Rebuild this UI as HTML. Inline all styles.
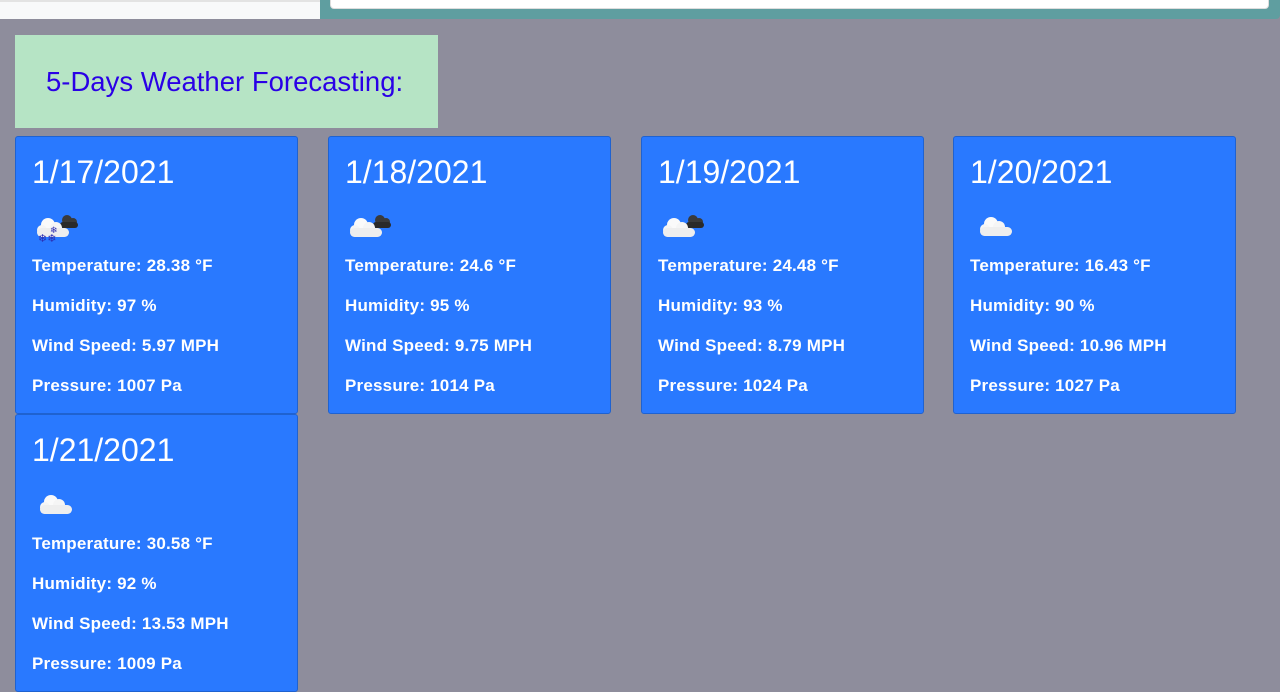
<!DOCTYPE html>
<html><head><style>
*{box-sizing:border-box;margin:0;padding:0}
body{width:1280px;height:692px;overflow:hidden;background:#8e8d9c;font-family:"Liberation Sans",sans-serif;position:relative}
.tl{position:absolute;left:0;top:0;width:320px;height:19px;background:#f8f9fa;border-top:2px solid #e3e3e3}
.tr{position:absolute;left:320px;top:0;width:960px;height:19px;background:#5f9ea0;border-bottom-right-radius:4px}
.tb{position:absolute;left:330px;top:0;width:939px;height:9px;background:#fff;border:1px solid #ddd;border-top:none;border-radius:0 0 4px 4px}
.hd{position:absolute;left:15px;top:35px;width:423px;height:93px;background:#b6e4c5;color:#2a00e6;font-size:27.5px;padding-left:31px;line-height:93px}
.c{position:absolute;width:283px;height:278px;background:#2979ff;border:1px solid #1f62d0;border-radius:3px;color:#fff}
.d{position:absolute;top:17px;left:16px;font-size:32px}
.ic{position:absolute;top:72px;left:18px}
.p{position:absolute;left:16px;font-size:17px;font-weight:bold;letter-spacing:0.2px}
</style></head><body>
<div class="tl"></div><div class="tr"></div><div class="tb"></div>
<div class="hd">5-Days Weather Forecasting:</div>

<svg width="0" height="0" style="position:absolute">
<defs>
<g id="dk"><circle cx="33" cy="11" r="5" fill="#3a3a3a"/><circle cx="39" cy="13" r="4" fill="#3a3a3a"/><rect x="26" y="13" width="18" height="6" rx="3" fill="#2a2a2a"/></g>
<g id="wh"><circle cx="14" cy="16" r="7" fill="#fafafa"/><circle cx="22" cy="19" r="6" fill="#f5f5f5"/><circle cx="8" cy="21" r="5" fill="#f5f5f5"/><rect x="3" y="19" width="32" height="9" rx="4.5" fill="#eee"/></g>
</defs></svg>

<div class="c" style="left:15px;top:136px">
<div class="d">1/17/2021</div>
<svg class="ic" width="50" height="36" viewBox="0 0 50 36"><use href="#dk"/><use href="#wh"/><text x="4" y="33" font-size="11" fill="#2a2ab0">❄❄</text><text x="16" y="24" font-size="9" fill="#2a2ab0">❄</text></svg>
<div class="p" style="top:119px">Temperature: 28.38 °F</div>
<div class="p" style="top:159px">Humidity: 97 %</div>
<div class="p" style="top:199px">Wind Speed: 5.97 MPH</div>
<div class="p" style="top:239px">Pressure: 1007 Pa</div>
</div>

<div class="c" style="left:328px;top:136px">
<div class="d">1/18/2021</div>
<svg class="ic" width="50" height="36" viewBox="0 0 50 36"><use href="#dk"/><use href="#wh"/></svg>
<div class="p" style="top:119px">Temperature: 24.6 °F</div>
<div class="p" style="top:159px">Humidity: 95 %</div>
<div class="p" style="top:199px">Wind Speed: 9.75 MPH</div>
<div class="p" style="top:239px">Pressure: 1014 Pa</div>
</div>

<div class="c" style="left:641px;top:136px">
<div class="d">1/19/2021</div>
<svg class="ic" width="50" height="36" viewBox="0 0 50 36"><use href="#dk"/><use href="#wh"/></svg>
<div class="p" style="top:119px">Temperature: 24.48 °F</div>
<div class="p" style="top:159px">Humidity: 93 %</div>
<div class="p" style="top:199px">Wind Speed: 8.79 MPH</div>
<div class="p" style="top:239px">Pressure: 1024 Pa</div>
</div>

<div class="c" style="left:953px;top:136px">
<div class="d">1/20/2021</div>
<svg class="ic" width="50" height="36" viewBox="0 0 50 36"><use href="#wh" transform="translate(5,-1)"/></svg>
<div class="p" style="top:119px">Temperature: 16.43 °F</div>
<div class="p" style="top:159px">Humidity: 90 %</div>
<div class="p" style="top:199px">Wind Speed: 10.96 MPH</div>
<div class="p" style="top:239px">Pressure: 1027 Pa</div>
</div>

<div class="c" style="left:15px;top:414px">
<div class="d">1/21/2021</div>
<svg class="ic" width="50" height="36" viewBox="0 0 50 36"><use href="#wh" transform="translate(3,-1)"/></svg>
<div class="p" style="top:119px">Temperature: 30.58 °F</div>
<div class="p" style="top:159px">Humidity: 92 %</div>
<div class="p" style="top:199px">Wind Speed: 13.53 MPH</div>
<div class="p" style="top:239px">Pressure: 1009 Pa</div>
</div>
</body></html>
